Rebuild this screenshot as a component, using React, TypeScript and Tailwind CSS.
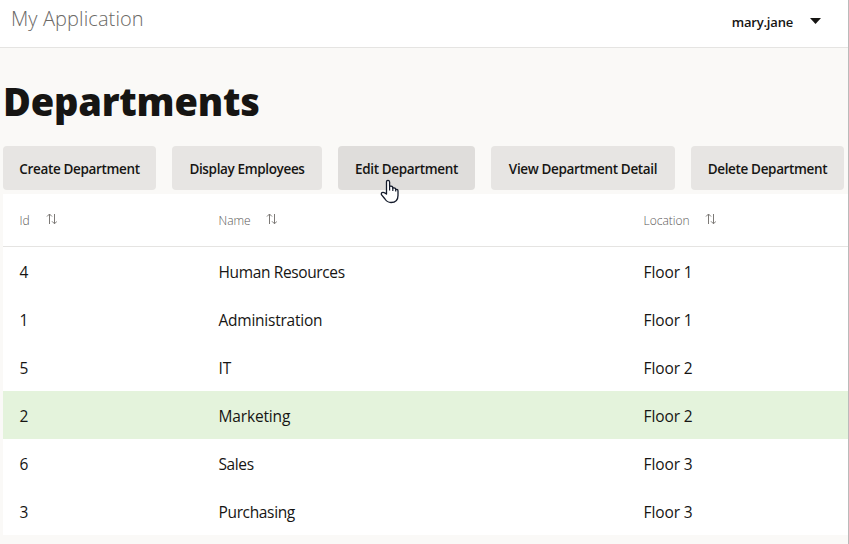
const actions = [
  { label: 'Create Department', box: 'w-[153px] bg-[#e7e5e3]' },
  { label: 'Display Employees', box: 'w-[150px] bg-[#e7e5e3]' },
  { label: 'Edit Department', box: 'w-[137px] bg-[#dfdddb]' },
  { label: 'View Department Detail', box: 'w-[184px] bg-[#e7e5e3]' },
  { label: 'Delete Department', box: 'w-[153px] bg-[#e7e5e3]' },
];

const columns = [
  { label: 'Id', gap: 'gap-[16px]' },
  { label: 'Name', gap: 'gap-[15.5px]' },
  { label: 'Location', gap: 'gap-[15px]' },
];

const rows = [
  { id: 4, name: 'Human Resources', location: 'Floor 1', spacing: 'tracking-[-0.37px]' },
  { id: 1, name: 'Administration', location: 'Floor 1', spacing: 'tracking-[-0.24px]' },
  { id: 5, name: 'IT', location: 'Floor 2', spacing: 'tracking-[-0.2px]' },
  { id: 2, name: 'Marketing', location: 'Floor 2', spacing: 'tracking-[-0.15px]', selected: true },
  { id: 6, name: 'Sales', location: 'Floor 3', spacing: 'tracking-[-0.4px]' },
  { id: 3, name: 'Purchasing', location: 'Floor 3', spacing: 'tracking-[-0.35px]' },
];

function SortIcon() {
  return (
    <svg className="mb-[3px]" width="11" height="12" viewBox="0 0 11 12" fill="none" stroke="#7c7976" strokeWidth="1">
      <path d="M3.5 11V1M1 3.5L3.5 1L6 3.5M8.5 1V10.8M6 8.3L8.5 10.8L11 8.3" />
    </svg>
  );
}

function HandPointer() {
  return (
    <svg className="absolute left-[42px] top-[33px] z-10" width="20" height="25" viewBox="0 0 20 25">
      <path
        d="M6.5 15V3Q6.5 1.3 8 1.3T9.6 3V7.3Q12.8 6.6 12.8 9Q15.6 8.4 15.7 10.5Q18 10 18 12V16.5Q18 23.5 11 23.5Q7.3 23.5 5 20L1.4 15.6Q1 13.4 3 13.3Q4.4 13.2 6.5 15Z"
        fill="#fff"
        stroke="#141b2b"
        strokeWidth="1.3"
        strokeLinejoin="round"
      />
      <path d="M9.6 7V11.5M12.8 8.6V12M15.7 10.3V12.5" stroke="#141b2b" strokeWidth="1.2" />
    </svg>
  );
}

export default function App() {
  return (
    <div className="h-[544px] w-[849px] overflow-hidden border-r border-[#bababa] bg-[#faf9f7] font-['Open_Sans','Noto_Sans',sans-serif] text-[#161513]">
      <header className="flex h-12 items-start justify-between border-b border-[#e5e4e2] bg-white pl-[11px] pr-[27px]">
        <span className="pt-[5px] text-[20px] font-[350] leading-7 tracking-[0.1px] text-[#6b6966]">My Application</span>
        <button className="flex h-11 items-center gap-[17px] text-[13px] font-[560]">
          <span className="pt-[2px] tracking-[-0.2px]">mary.jane</span>
          <svg className="mb-[3px]" width="11" height="6" viewBox="0 0 11 6"><path d="M0 0H11L5.5 6Z" fill="#161513" /></svg>
        </button>
      </header>
      <main className="pl-[3px]">
        <h1 className="h-[98px] pt-[29px] text-[38px] font-extrabold leading-[48px] tracking-[-0.2px]">Departments</h1>
        <div className="flex h-12 gap-4">
          {actions.map((a) => (
            <div key={a.label} className={`relative h-11 shrink-0 rounded ${a.box}`}>
              <button className="flex h-11 w-full items-center justify-center whitespace-nowrap pt-[2px] text-[13.5px] font-[560] tracking-[-0.35px]">{a.label}</button>
              {a.label === 'Edit Department' && <HandPointer />}
            </div>
          ))}
        </div>
        <section className="bg-white">
          <div className="grid h-[53px] grid-cols-[199px_425px_1fr] border-b border-[#e5e4e2]">
            {columns.map((c) => (
              <div key={c.label} className={`flex items-center pl-[16.5px] pt-px text-xs font-[350] text-[#5b5957] ${c.gap}`}>
                <span className="pt-px">{c.label}</span>
                <SortIcon />
              </div>
            ))}
          </div>
          {rows.map((r) => (
            <div key={r.id} className={`grid h-12 grid-cols-[199px_425px_1fr] items-center pt-[3px] text-[15.5px] font-[370] ${r.selected ? 'bg-[#e4f3dc]' : ''}`}>
              <span className="pl-[16.5px]">{r.id}</span>
              <span className={`pl-[16.5px] ${r.spacing}`}>{r.name}</span>
              <span className="pl-[16.5px] tracking-[-0.1px]">{r.location}</span>
            </div>
          ))}
        </section>
      </main>
    </div>
  );
}
